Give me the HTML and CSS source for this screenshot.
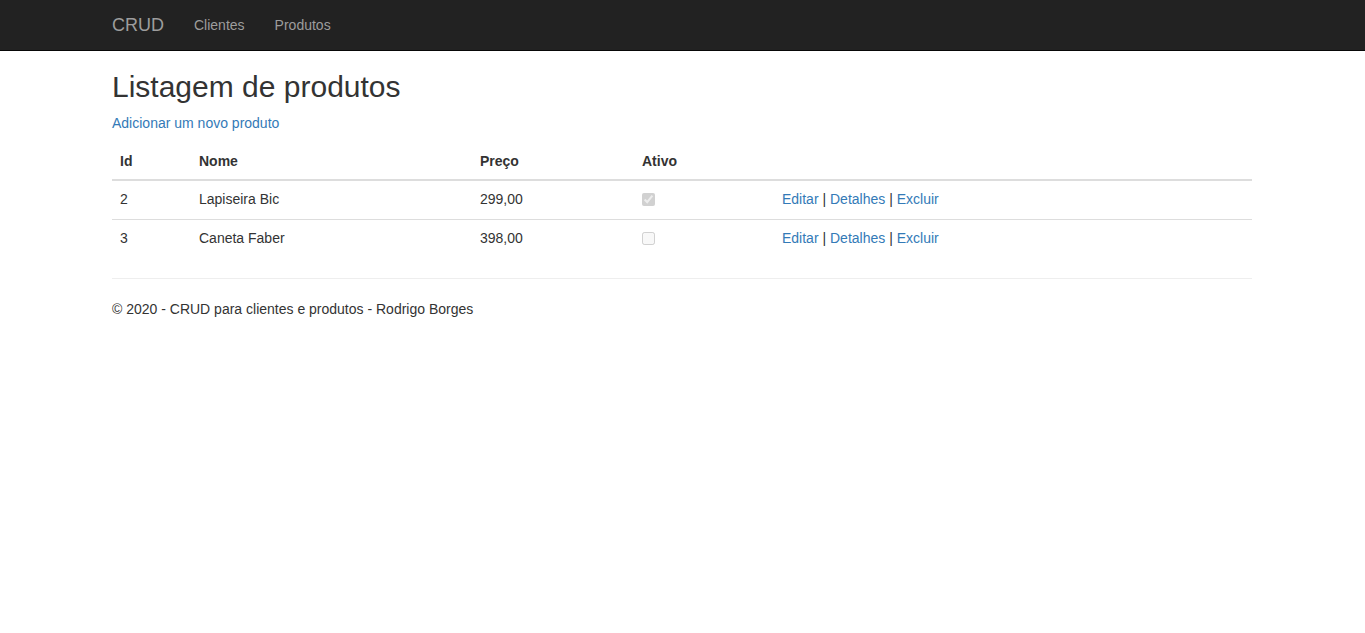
FILE: index.html
```html
<!DOCTYPE html>
<html lang="pt-br">
<head>
<meta charset="utf-8">
<title>Listagem de produtos</title>
<link rel="stylesheet" href="styles.css">
</head>
<body>
<div class="navbar">
  <div class="container nav-inner">
    <a class="brand" href="#">CRUD</a>
    <ul class="nav">
      <li><a href="#">Clientes</a></li>
      <li><a href="#">Produtos</a></li>
    </ul>
  </div>
</div>
<div class="container body-content">
  <h2>Listagem de produtos</h2>
  <p><a href="#">Adicionar um novo produto</a></p>
  <table class="table">
    <thead>
      <tr>
        <th class="c-id">Id</th>
        <th class="c-nome">Nome</th>
        <th class="c-preco">Preço</th>
        <th class="c-ativo">Ativo</th>
        <th></th>
      </tr>
    </thead>
    <tbody>
      <tr>
        <td>2</td>
        <td>Lapiseira Bic</td>
        <td>299,00</td>
        <td><input class="chk" type="checkbox" checked disabled></td>
        <td><a href="#">Editar</a> | <a href="#">Detalhes</a> | <a href="#">Excluir</a></td>
      </tr>
      <tr>
        <td>3</td>
        <td>Caneta Faber</td>
        <td>398,00</td>
        <td><input class="chk" type="checkbox" disabled></td>
        <td><a href="#">Editar</a> | <a href="#">Detalhes</a> | <a href="#">Excluir</a></td>
      </tr>
    </tbody>
  </table>
  <hr>
  <footer>
    <p>&copy; 2020 - CRUD para clientes e produtos - Rodrigo Borges</p>
  </footer>
</div>
</body>
</html>
```
FILE: styles.css
```css
* { box-sizing: border-box; }
html, body { margin: 0; }
body {
  font-family: "Liberation Sans", Arial, Helvetica, sans-serif;
  font-size: 14px;
  line-height: 20px;
  color: #333;
  background: #fff;
  padding-top: 50px;
}
a { color: #337ab7; text-decoration: none; }
.container {
  width: 1170px;
  margin: 0 auto;
  padding: 0 15.5px 0 14.5px;
}
.navbar {
  position: fixed;
  top: 0; left: 0; right: 0;
  height: 51px;
  background: #222;
  border-bottom: 1px solid #080808;
  z-index: 10;
}
.nav-inner { display: flex; align-items: flex-start; }
.brand {
  display: block;
  margin-left: -15px;
  padding: 15px;
  height: 50px;
  font-size: 18px;
  line-height: 20px;
  color: #9d9d9d;
}
.nav { display: flex; list-style: none; margin: 0; padding: 0; }
.nav a {
  display: block;
  padding: 15px;
  line-height: 20px;
  color: #9d9d9d;
}
h2 {
  font-size: 30px;
  font-weight: 500;
  line-height: 1.1;
  margin: 20px 0 10px;
  color: #333;
}
p { margin: 0 0 10px; }
.table {
  width: 100%;
  border-collapse: collapse;
  border-spacing: 0;
  margin-bottom: 20px;
}
.table th, .table td {
  padding: 8px;
  line-height: 20px;
  text-align: left;
  vertical-align: top;
}
.table th {
  font-weight: bold;
  vertical-align: bottom;
  border-bottom: 2px solid #ddd;
}
.table td { border-top: 1px solid #ddd; }
.c-id { width: 79px; }
.c-nome { width: 281px; }
.c-preco { width: 162px; }
.c-ativo { width: 140px; }
.chk { margin: 4px 0 0; width: 13px; height: 13px; line-height: normal; }
hr {
  margin: 20px 0;
  border: 0;
  border-top: 1px solid #eee;
  height: 0;
}
footer p { margin: 0 0 10px; }
```
